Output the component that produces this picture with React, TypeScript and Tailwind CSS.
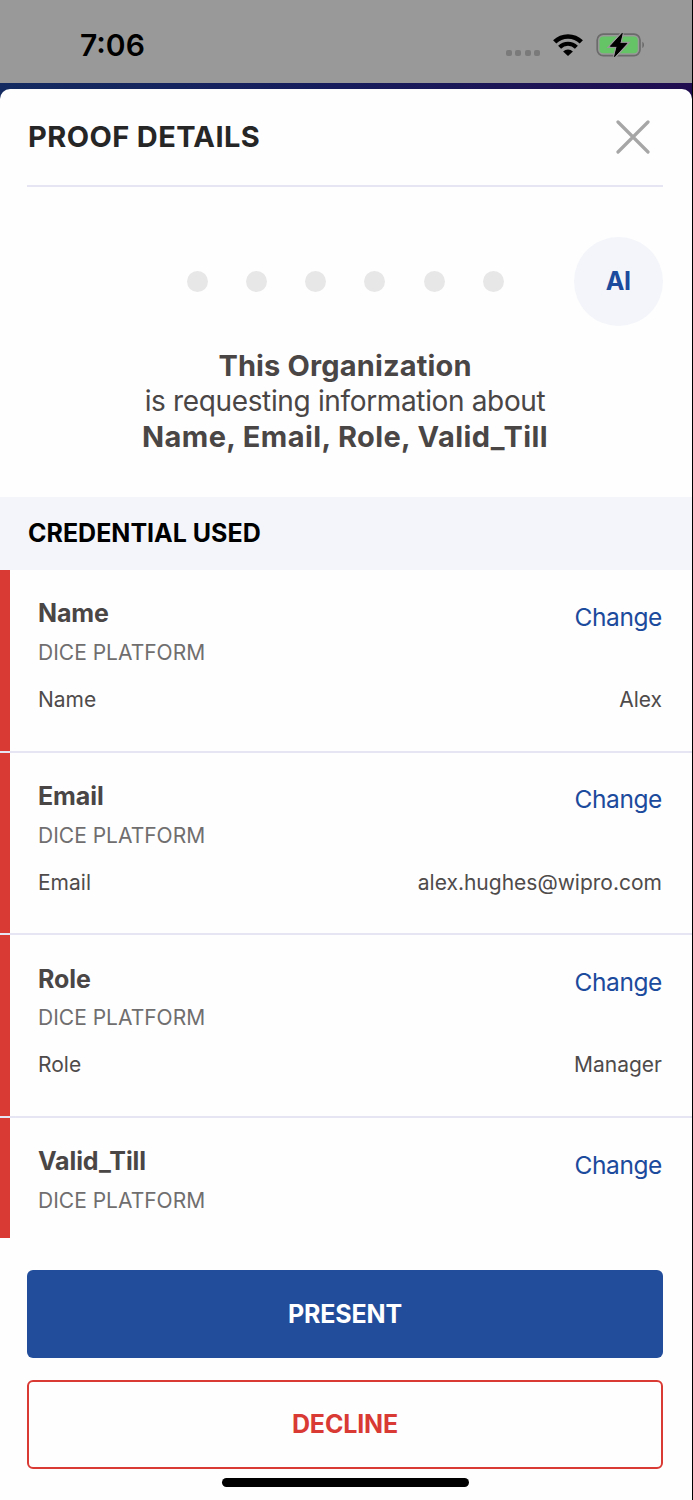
const credentials = [
    { name: "Name", value: "Alex" },
    { name: "Email", value: "alex.hughes@wipro.com" },
    { name: "Role", value: "Manager" },
    { name: "Valid_Till", value: "" },
]

function StatusBar() {
    return (
        <div className="flex h-[82.5px] items-start justify-between bg-[#999999] pt-[27px] pr-[45.5px] pl-20">
            <p className="text-[30px] leading-9 font-semibold text-black">7:06</p>
            <div className="flex items-center pt-[5px]">
                <div className="mt-[15px] flex gap-[3.5px]">
                    <span className="size-1.5 rounded-[2px] bg-[#7a7a7a]"></span>
                    <span className="size-1.5 rounded-[2px] bg-[#7a7a7a]"></span>
                    <span className="size-1.5 rounded-[2px] bg-[#7a7a7a]"></span>
                    <span className="size-1.5 rounded-[2px] bg-[#7a7a7a]"></span>
                </div>
                <svg className="ml-[13px]" width="30" height="22" viewBox="0 0 30 22">
                    <path d="M1.7 7.9a19 19 0 0 1 26.6 0" fill="none" stroke="#000" strokeWidth="4.6" />
                    <path d="M6.6 13.2a12 12 0 0 1 16.8 0" fill="none" stroke="#000" strokeWidth="4.2" />
                    <path d="M15 22l-4.9-4.6a7 7 0 0 1 9.8 0z" fill="#000" />
                </svg>
                <svg className="ml-[13px]" width="50" height="26" viewBox="0 0 50 26">
                    <rect x="1.2" y="2.2" width="42.8" height="21.4" rx="6" fill="none" stroke="#6b6b6b" strokeWidth="1.7" />
                    <rect x="3.5" y="4.5" width="38.2" height="16.8" rx="3.8" fill="#65c466" />
                    <path d="M46.3 9.8c2.3.9 2.3 5.3 0 6.2z" fill="#6b6b6b" />
                    <path d="M26.2 1.4L14.4 14.3h6.8L18.6 24.6 30.8 11.4h-7z" fill="#000" stroke="#999999" strokeWidth="3.4" paintOrder="stroke" />
                    <path d="M26.2 1.4L14.4 14.3h6.8L18.6 24.6 30.8 11.4h-7z" fill="#000" stroke="#000" strokeWidth="1" strokeLinejoin="round" />
                </svg>
            </div>
        </div>
    )
}

function CredentialRow({ name, value, last }: { name: string; value: string; last: boolean }) {
    return (
        <div className={last ? "flex h-[119.5px] overflow-hidden" : "flex h-[182.7px] border-b-2 border-[#e6e5f4]"}>
            <div className="w-[9.5px] shrink-0 bg-[#d93a34]"></div>
            <div className="flex-1 pt-[27.3px] pr-[29.5px] pl-[28.5px]">
                <div className="flex justify-between">
                    <div>
                        <p className="text-[25px] leading-8 font-bold tracking-[-0.1px] text-[#4a4646]">{name}</p>
                        <p className="mt-[8.7px] text-[21px] leading-[30px] text-[#706e6e]">DICE PLATFORM</p>
                    </div>
                    <button className="mt-[3.5px] h-8 text-[24.5px] leading-8 tracking-[-0.4px] text-[#1c4a9c]">Change</button>
                </div>
                {value && (
                    <div className="mt-[17px] flex justify-between text-[21px] leading-[30px] text-[#4f4b4b]">
                        <p>{name}</p>
                        <p>{value}</p>
                    </div>
                )}
            </div>
        </div>
    )
}

export default function App() {
    return (
        <div className="h-[1500px] w-[693px] bg-black pr-[1.5px] font-[Inter,sans-serif]">
            <StatusBar />
            <div className="h-[1417.5px] bg-linear-to-r from-[#132b60] via-[#171c5c] to-[#200d50] pt-1.5">
                <div className="flex h-[1411.5px] flex-col rounded-t-[10px] bg-[#fefefe]">
                    <div className="mx-[27px] mr-[28.5px] flex h-[98.5px] shrink-0 items-center justify-between border-b-2 border-[#e6e5f4]">
                        <h1 className="pl-px text-[29px] leading-9 font-bold tracking-[0.4px] text-[#262626]">PROOF DETAILS</h1>
                        <svg className="mr-[13px]" width="34" height="34" viewBox="0 0 34 34">
                            <path d="M2 2l30 30M32 2L2 32" stroke="#a6a6a6" strokeWidth="3.2" strokeLinecap="round" />
                        </svg>
                    </div>

                    <div className="mt-[50px] mr-[29px] flex shrink-0 items-center justify-end">
                        <div className="mr-[70px] flex gap-[38.3px]">
                            {[0, 1, 2, 3, 4, 5].map((i) => (
                                <span key={i} className="size-[21px] rounded-full bg-[#e7e7e7]"></span>
                            ))}
                        </div>
                        <div className="flex size-[88.5px] items-center justify-center rounded-full bg-[#f3f5fa] text-[25px] font-bold tracking-[-0.3px] text-[#1c4a9c]">AI</div>
                    </div>

                    <div className="mt-[22px] mr-[1.5px] shrink-0 text-center text-[29px] leading-[35.5px] text-[#4a4646]">
                        <p className="font-bold tracking-[0.15px]">This Organization</p>
                        <p className="pt-px text-[28px] leading-[34.5px] tracking-[-0.35px]">is requesting information about</p>
                        <p className="font-bold tracking-[0.4px]">Name, Email, Role, Valid_Till</p>
                    </div>

                    <div className="mt-[43px] flex h-[73px] shrink-0 items-center bg-[#f3f5fa] pl-7">
                        <h2 className="text-[25px] font-bold text-black">CREDENTIAL USED</h2>
                    </div>

                    <div className="shrink-0">
                        {credentials.map((c, i) => (
                            <CredentialRow key={c.name} name={c.name} value={c.value} last={i === credentials.length - 1} />
                        ))}
                    </div>

                    <div className="mt-8 mr-[28.5px] ml-[27px] flex shrink-0 flex-col gap-[22px] text-[25px] font-bold tracking-[-0.15px]">
                        <button className="h-[88.5px] rounded-md bg-[#214d9b] pt-px text-white">PRESENT</button>
                        <button className="h-[88.5px] rounded-md border-2 border-[#d93a34] pt-px text-[#d93a34]">DECLINE</button>
                    </div>
                    <div className="mx-auto mt-[9px] h-[9px] w-[247px] shrink-0 rounded-full bg-black"></div>
                </div>
            </div>
        </div>
    )
}
